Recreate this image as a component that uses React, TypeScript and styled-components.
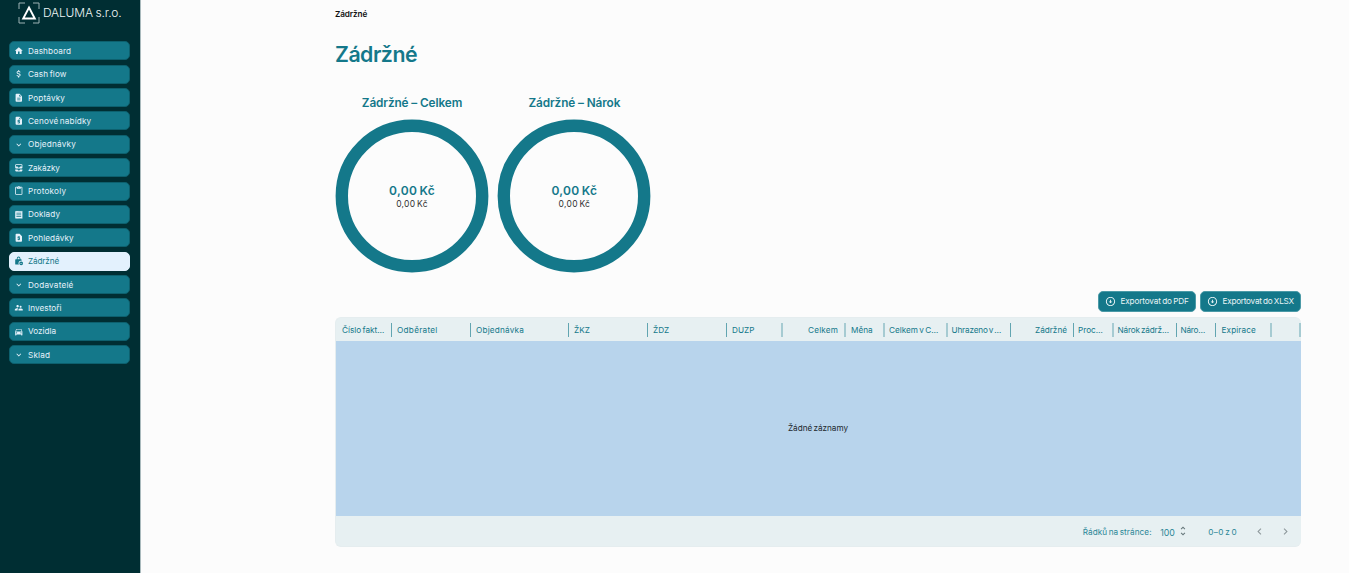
import React from 'react';
import styled, { createGlobalStyle } from 'styled-components';
import {
  MdHome, MdAttachMoney, MdDescription, MdRequestQuote, MdExpandMore, MdAllInbox, MdContentPaste,
  MdReceipt, MdRequestPage, MdSupervisorAccount, MdDirectionsCar, MdUnfoldMore,
  MdNavigateBefore, MdNavigateNext, MdArrowCircleDown,
} from 'react-icons/md';

const teal = '#14788a';

const GlobalStyle = createGlobalStyle`
  * { box-sizing: border-box; }
  body {
    margin: 0;
    background: #fcfcfc;
    font-family: Inter, "Noto Sans", sans-serif;
    overflow: hidden;
  }
`;

const Page = styled.div`
  display: flex;
  height: 573px;
`;

const Sidebar = styled.aside`
  width: 141px;
  flex: none;
  background: #002e33;
  border-right: 1px solid #a9babd;
  padding: 1px 9.6px 0 9.4px;
`;

const Brand = styled.div`
  display: flex;
  align-items: center;
  height: 24px;
  padding-left: 8.6px;
  gap: 3px;
  margin-bottom: 16.3px;
`;

const BrandName = styled.span`
  font-size: 12px;
  font-weight: 300;
  line-height: 24px;
  letter-spacing: -0.17px;
  white-space: nowrap;
  word-spacing: -0.5px;
  color: #eef5f6;
`;

const NavItem = styled.div<{ $active?: boolean }>`
  display: flex;
  align-items: center;
  gap: 4px;
  height: 19px;
  margin: 0 0 4.38px;
  padding: 0 4px;
  border-radius: 5px;
  border: 1px solid ${p => (p.$active ? '#e3f1fd' : '#0d606e')};
  background: ${p => (p.$active ? '#e3f1fd' : teal)};
  color: ${p => (p.$active ? teal : '#e6f2fb')};
  svg { width: 9.6px; height: 9.6px; flex: none; }
`;

const Text = styled.span<{ $size?: number; $ls?: number; $ws?: number; $weight?: number; $color?: string }>`
  font-size: ${p => p.$size ?? 8.2}px;
  font-weight: ${p => p.$weight ?? 400};
  letter-spacing: ${p => p.$ls ?? 0}px;
  word-spacing: ${p => p.$ws ?? -1}px;
  color: ${p => p.$color ?? 'inherit'};
  white-space: nowrap;
`;

const Main = styled.main`
  width: 966px;
  margin-left: 194px;
  display: flex;
  flex-direction: column;
`;

const Crumb = styled.div`
  height: 28px;
  line-height: 23px;
  color: #111;
`;

const Title = styled.h1`
  margin: 10px 0 0;
  height: 32px;
  font-size: 21.3px;
  font-weight: 600;
  letter-spacing: -0.5px;
  line-height: 32px;
  color: ${teal};
`;

const Charts = styled.div`
  display: flex;
  gap: 8.4px;
  margin-top: 23px;
`;

const Chart = styled.section`
  width: 154px;
  display: flex;
  flex-direction: column;
  align-items: center;
`;

const ChartTitle = styled.div`
  height: 26px;
  line-height: 16px;
  color: ${teal};
`;

const Ring = styled.div`
  display: grid;
  place-items: center;
  > * { grid-area: 1 / 1; }
  svg { display: block; }
`;

const Amounts = styled.div`
  display: flex;
  flex-direction: column;
  align-items: center;
  padding-top: 3px;
`;

const AmountLine = styled.div<{ $height: number }>`
  display: flex;
  height: ${p => p.$height}px;
  line-height: 14px;
`;

const Actions = styled.div`
  display: flex;
  justify-content: flex-end;
  gap: 4px;
  margin-top: 18px;
`;

const ExportButton = styled.button<{ $width: number }>`
  width: ${p => p.$width}px;
  height: 21px;
  display: flex;
  align-items: center;
  gap: 5px;
  padding: 0 0 0 5.5px;
  border: 1px solid #4b9aa7;
  border-radius: 5px;
  background: ${teal};
  color: #e9f4f6;
  font-family: inherit;
  span { padding-bottom: 1px; }
  svg { width: 11px; height: 11px; flex: none; }
`;

const Table = styled.section`
  margin-top: 5px;
  height: 230px;
  border: 1px solid #e5edef;
  border-right: 0;
  border-radius: 6px;
  overflow: hidden;
  display: flex;
  flex-direction: column;
  background: #e7f0f2;
  color: ${teal};
`;

const HeaderRow = styled.div`
  display: flex;
  align-items: center;
  height: 23px;
  flex: none;
`;

const HeaderCell = styled.div<{ $width: number; $pad: number; $right?: boolean; $soft?: boolean }>`
  width: ${p => p.$width}px;
  height: 14px;
  flex: none;
  display: flex;
  align-items: center;
  justify-content: ${p => (p.$right ? 'flex-end' : 'flex-start')};
  padding: 1px ${p => (p.$right ? 6 : 0)}px 0 ${p => p.$pad}px;
  border-right: ${p => (p.$soft ? '2px solid #a6cbd2' : '1px solid #62a5b1')};
`;

const Empty = styled.div`
  flex: 1;
  display: flex;
  align-items: center;
  justify-content: center;
  padding: 0 1px 2px 0;
  background: #b8d4ec;
  color: #22292e;
`;

const Footer = styled.footer`
  height: 30px;
  flex: none;
  display: flex;
  align-items: center;
  justify-content: flex-end;
  padding: 1px 9px 0 0;
  color: #2b8797;
  svg { flex: none; }
`;

const PageSize = styled.div`
  display: flex;
  align-items: center;
  gap: 2.5px;
  margin: 1px 19px 0 8.5px;
  svg { width: 12px; height: 12px; margin-top: -3px; color: #66777b; }
`;

const Pager = styled.div`
  display: flex;
  gap: 13px;
  margin: -1px 0 0 16px;
  color: #8e999c;
  svg { width: 13px; height: 13px; }
`;

const RetainIcon = () => (
  <svg viewBox="0 0 24 24" fill="currentColor">
    <path d="M7 8V6a4.5 4.5 0 0 1 9 0v2h1.5A1.5 1.5 0 0 1 19 9.5V12a6 6 0 0 0-6.5 9.5H4.5A1.5 1.5 0 0 1 3 20V9.5A1.5 1.5 0 0 1 4.5 8Zm2 0h5V6a2.5 2.5 0 0 0-5 0Z" />
    <path fillRule="evenodd" d="M18 13.5a4.7 4.7 0 1 1 0 9.4a4.7 4.7 0 0 1 0-9.4ZM15.5 17.5v1.5h5v-1.5Z" />
  </svg>
);

const nav: { label: string; icon: React.ReactNode; ls?: number; active?: boolean }[] = [
  { label: 'Dashboard', icon: <MdHome />, ls: 0.1 },
  { label: 'Cash flow', icon: <MdAttachMoney />, ls: 0.12 },
  { label: 'Poptávky', icon: <MdDescription />, ls: 0.12 },
  { label: 'Cenové nabídky', icon: <MdRequestQuote />, ls: 0.14 },
  { label: 'Objednávky', icon: <MdExpandMore />, ls: 0.2 },
  { label: 'Zakázky', icon: <MdAllInbox />, ls: -0.08 },
  { label: 'Protokoly', icon: <MdContentPaste />, ls: 0.2 },
  { label: 'Doklady', icon: <MdReceipt />, ls: 0.08 },
  { label: 'Pohledávky', icon: <MdRequestPage />, ls: 0.08 },
  { label: 'Zádržné', icon: <RetainIcon />, ls: -0.13, active: true },
  { label: 'Dodavatelé', icon: <MdExpandMore />, ls: 0.2 },
  { label: 'Investoři', icon: <MdSupervisorAccount />, ls: 0.05 },
  { label: 'Vozidla', icon: <MdDirectionsCar /> },
  { label: 'Sklad', icon: <MdExpandMore />, ls: 0.18 },
];

const columns: { label: string; width: number; pad?: number; right?: boolean; soft?: boolean; ls?: number }[] = [
  { label: 'Číslo fakt…', width: 56, pad: 6 },
  { label: 'Odběratel', width: 79, ls: 0.28 },
  { label: 'Objednávka', width: 98, ls: 0.2 },
  { label: 'ŽKZ', width: 79 },
  { label: 'ŽDZ', width: 79 },
  { label: 'DUZP', width: 56, soft: true },
  { label: 'Celkem', width: 63, right: true, soft: true, ls: 0.15 },
  { label: 'Měna', width: 39, soft: true },
  { label: 'Celkem v C…', width: 63, pad: 4, soft: true },
  { label: 'Uhrazeno v …', width: 63, pad: 3.5, ls: -0.17 },
  { label: 'Zádržné', width: 63, right: true },
  { label: 'Proc…', width: 40, pad: 4, soft: true },
  { label: 'Nárok zádrž…', width: 63, pad: 3.5, ls: -0.16 },
  { label: 'Náro…', width: 39, pad: 3.5, ls: -0.2 },
  { label: 'Expirace', width: 56, pad: 5.5, soft: true, ls: 0.12 },
  { label: '', width: 29, soft: true },
];

const Logo = () => (
  <svg width="22" height="22" viewBox="0 0 22 22" fill="none">
    <path d="M1 7V1H7M15 1H21V7M21 15V21H15M7 21H1V15" stroke="#9db2b5" strokeWidth="1" />
    <path d="M11 5.5L16.8 16.5H5.2Z" stroke="#fff" strokeWidth="1.9" />
  </svg>
);

const Donut = () => (
  <svg width="154" height="154" viewBox="0 0 154 154">
    <circle cx="77" cy="77" r="70.2" fill="none" stroke={teal} strokeWidth="12.4" />
  </svg>
);

export default function App() {
  return (
    <>
      <GlobalStyle />
      <Page>
        <Sidebar>
          <Brand>
            <Logo />
            <BrandName>DALUMA s.r.o.</BrandName>
          </Brand>
          {nav.map(n => (
            <NavItem key={n.label} $active={n.active}>
              {n.icon}
              <Text $ls={n.ls}>{n.label}</Text>
            </NavItem>
          ))}
        </Sidebar>
        <Main>
          <Crumb><Text $weight={600} $ls={-0.1}>Zádržné</Text></Crumb>
          <Title>Zádržné</Title>
          <Charts>
            {['Zádržné – Celkem', 'Zádržné – Nárok'].map(t => (
              <Chart key={t}>
                <ChartTitle><Text $size={11.8} $weight={600} $ls={-0.1} $ws={0}>{t}</Text></ChartTitle>
                <Ring>
                  <Donut />
                  <Amounts>
                    <AmountLine $height={13}>
                      <Text $size={12} $weight={600} $ls={0.28} $color={teal}>0,00 Kč</Text>
                    </AmountLine>
                    <AmountLine $height={14}>
                      <Text $size={8.5} $ls={0.28} $color="#333">0,00 Kč</Text>
                    </AmountLine>
                  </Amounts>
                </Ring>
              </Chart>
            ))}
          </Charts>
          <Actions>
            <ExportButton $width={98}><MdArrowCircleDown /><Text $ls={-0.15} $ws={-0.7}>Exportovat do PDF</Text></ExportButton>
            <ExportButton $width={101}><MdArrowCircleDown /><Text $ls={-0.25} $ws={-0.7}>Exportovat do XLSX</Text></ExportButton>
          </Actions>
          <Table>
            <HeaderRow>
              {columns.map((c, i) => (
                <HeaderCell key={i} $width={c.width} $pad={c.pad ?? 5} $right={c.right} $soft={c.soft}>
                  <Text $ls={c.ls}>{c.label}</Text>
                </HeaderCell>
              ))}
            </HeaderRow>
            <Empty><Text $ls={-0.03}>Žádné záznamy</Text></Empty>
            <Footer>
              <Text $ls={0.08}>Řádků na stránce:</Text>
              <PageSize><Text $size={8.8}>100</Text><MdUnfoldMore /></PageSize>
              <Text $ls={0.28}>0–0 z 0</Text>
              <Pager><MdNavigateBefore /><MdNavigateNext /></Pager>
            </Footer>
          </Table>
        </Main>
      </Page>
    </>
  );
}
